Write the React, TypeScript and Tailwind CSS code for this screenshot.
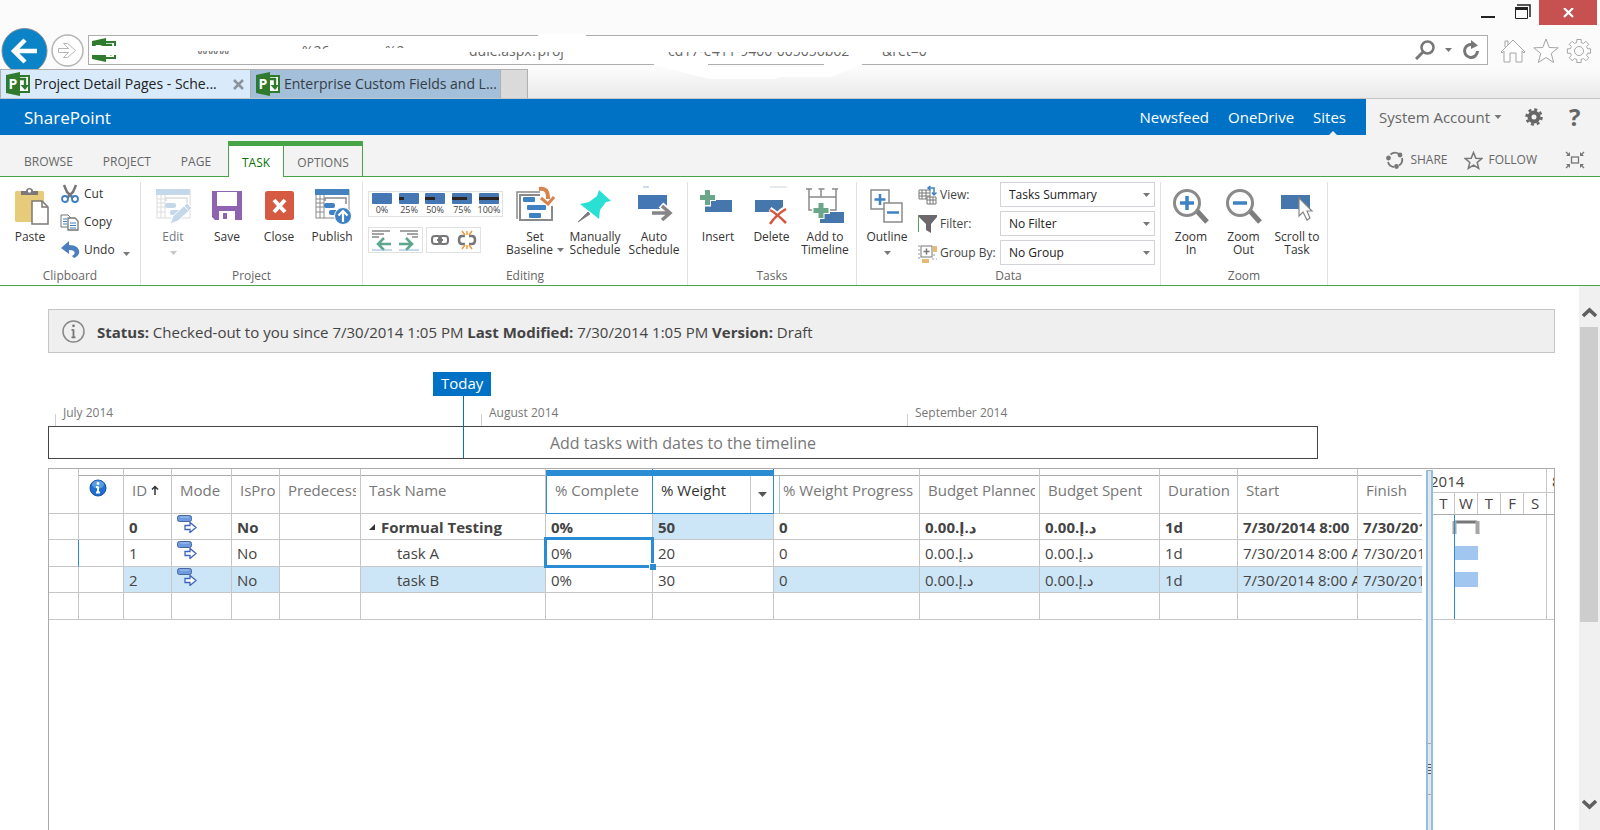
import type { ReactNode } from "react";

const ribbonTabs = ["BROWSE", "PROJECT", "PAGE"];
const suiteLinks = ["Newsfeed", "OneDrive", "Sites"];

const columns = [
  { title: "ID", width: 48 },
  { title: "Mode", width: 60 },
  { title: "IsPro", width: 48 },
  { title: "Predecess", width: 81 },
  { title: "Task Name", width: 185 },
  { title: "% Complete", width: 107 },
  { title: "% Weight", width: 121 },
  { title: "% Weight Progress", width: 146 },
  { title: "Budget Planned", width: 120 },
  { title: "Budget Spent", width: 120 },
  { title: "Duration", width: 78 },
  { title: "Start", width: 120 },
  { title: "Finish", width: 120 },
];

const tasks = [
  { id: "0", name: "Formual Testing", weight: "50", start: "7/30/2014 8:00", summary: true },
  { id: "1", name: "task A", weight: "20", start: "7/30/2014 8:00 AM", summary: false },
  { id: "2", name: "task B", weight: "30", start: "7/30/2014 8:00 AM", summary: false },
];

const percents = [
  { label: "0%", done: 0 },
  { label: "25%", done: 5 },
  { label: "50%", done: 10 },
  { label: "75%", done: 15 },
  { label: "100%", done: 20 },
];

const filters = [
  { id: "view", label: "View:", value: "Tasks Summary" },
  { id: "filter", label: "Filter:", value: "No Filter" },
  { id: "group", label: "Group By:", value: "No Group" },
];

function Caret({ className = "text-[#777]" }: { className?: string }) {
  return (
    <svg width="7" height="4" viewBox="0 0 7 4" className={className}>
      <path d="M0 0h7L3.5 4z" fill="currentColor" />
    </svg>
  );
}

function ProjectLogo() {
  return (
    <svg width="24" height="24" viewBox="0 0 24 24" className="shrink-0">
      <path d="M13 4h10v16H13" fill="#fff" stroke="#2f7a2d" strokeWidth="2" />
      <path d="M13 7h6v8" fill="none" stroke="#2f7a2d" strokeWidth="2.4" />
      <path d="M14.5 13l4.5 5 4-5z" fill="#2f7a2d" />
      <path d="M0 3l14-3v24L0 21z" fill="#2f7a2d" />
      <text x="2.5" y="17" fontSize="14" fontWeight="700" fill="#fff" fontFamily="Open Sans, sans-serif">
        P
      </text>
    </svg>
  );
}

/* ---------- Ribbon icons ---------- */

function Icon({ children }: { children: ReactNode }) {
  return (
    <svg width="40" height="40" viewBox="0 0 40 40" fill="none">
      {children}
    </svg>
  );
}

const PasteIcon = () => (
  <Icon>
    <rect x="5" y="5" width="29" height="31" rx="1.5" fill="#e6cc7a" />
    <path d="M11 9V5h5c0-4 7-4 7 0h5v4z" fill="#7d7777" />
    <circle cx="19.500" cy="5" r="1.700" fill="#fff" />
    <path d="M22 15h10l6 6v17H22z" fill="#fff" stroke="#7d7777" strokeWidth="1.500" />
    <path d="M32 15v6h6" stroke="#7d7777" strokeWidth="1.500" />
  </Icon>
);

const ScheduleSheet = ({ head, line, bar }: { head: string; line: string; bar: string }) => (
  <>
    <rect x="4" y="4" width="33" height="28" fill="#fff" stroke={line} />
    <path d="M4 13h8M4 17h8M4 21h8M4 26h8M8 9v23M12 9v23" stroke={line} />
    <path d="M13 15v-3h21v6" stroke={line} strokeWidth="1.500" />
    <rect x="3" y="3" width="34" height="6" fill={head} />
    <rect x="12" y="17" width="11" height="5" rx="2" fill={bar} />
    <rect x="17" y="24" width="11" height="5" rx="2" fill={bar} />
  </>
);

const EditIcon = () => (
  <Icon>
    <ScheduleSheet head="#c5d8ea" line="#dcdcdc" bar="#c5d8ea" />
    <path d="M17 38l3-8 14-13 5 5-14 13z" fill="#c5d8ea" stroke="#fff" strokeWidth="1" />
    <path d="M30 19l5 5" stroke="#fff" />
  </Icon>
);

const PublishIcon = () => (
  <Icon>
    <ScheduleSheet head="#4583be" line="#8a8a8a" bar="#3f82c4" />
    <circle cx="31" cy="30" r="8.500" fill="#3f82c4" stroke="#fff" />
    <path d="M31 36V25M26.500 29.500L31 25l4.500 4.500" stroke="#fff" strokeWidth="2.200" />
  </Icon>
);

const SaveIcon = () => (
  <Icon>
    <path d="M5 5h30v29H8l-3-3z" fill="#8f63b0" />
    <rect x="10" y="6" width="20" height="14" fill="#fff" />
    <path d="M12 25h16v9H12z" fill="#fff" />
    <rect x="16" y="27" width="4" height="6" fill="#8f63b0" />
  </Icon>
);

const CloseIcon = () => (
  <Icon>
    <rect x="6" y="5" width="29" height="29" rx="2.500" fill="#d65a41" />
    <path d="M15 14l11 12M26 14L15 26" stroke="#fff" strokeWidth="4" />
  </Icon>
);

const BaselineIcon = () => (
  <Icon>
    <path d="M2 33V6h23" stroke="#8a8a8a" strokeWidth="1.500" />
    <path d="M25 9H5v25h32V20" stroke="#8a8a8a" strokeWidth="2" />
    <rect x="8" y="11" width="12" height="5" rx="1" fill="#3f82c4" />
    <rect x="12" y="19" width="19" height="5" rx="1" fill="#3f82c4" />
    <rect x="14" y="27" width="12" height="5" rx="1" fill="#3f82c4" />
    <path d="M24 3c7-1 9 2 9 10" stroke="#d9834c" strokeWidth="4" />
    <path d="M26 12l7 6 6-7" stroke="#d9834c" strokeWidth="3" />
  </Icon>
);

const PinIcon = () => (
  <Icon>
    <path d="M13 26L3 36l12-8z" fill="#7d7d7d" stroke="#7d7d7d" />
    <path d="M24 4l12 11-5 1-6 8-1 9L5 18l9-2 8-6z" fill="#2ae0d2" />
  </Icon>
);

const AutoIcon = () => (
  <Icon>
    <path d="M9 1h6" stroke="#9ab9dc" />
    <rect x="4" y="9" width="29" height="14" fill="#4577b4" />
    <path d="M17 27h18M27 19l9 8-9 8" stroke="#fff" strokeWidth="7" />
    <path d="M18 27h17M28 20l8 7-8 7" stroke="#858585" strokeWidth="3.500" />
  </Icon>
);

const InsertIcon = () => (
  <Icon>
    <rect x="7" y="14" width="27" height="12" fill="#4577ac" />
    <path d="M9.500 3.500v17M1 11.500h17" stroke="#fff" strokeWidth="7" />
    <path d="M9.500 4v15M2 11.500h15" stroke="#6ba58a" strokeWidth="5" />
  </Icon>
);

const DeleteIcon = () => (
  <Icon>
    <path d="M18 1h17" stroke="#c9d4dc" />
    <rect x="3" y="14" width="28" height="12" fill="#4577ac" />
    <path d="M18 23c6 4 11 9 16 15M34 22c-7 4-11 9-16 16" stroke="#fff" strokeWidth="5" />
    <path d="M18 24c6 3 11 8 16 13M34 23c-7 4-12 9-16 15" stroke="#d6553d" strokeWidth="2.500" />
  </Icon>
);

const TimelineIcon = () => (
  <Icon>
    <path d="M1 3h6M13.500 3h6M27 3h6M4 3v21h10M16 3v8M31 3v21H20M4 11h27" stroke="#8a8a8a" strokeWidth="1.500" />
    <rect x="15" y="26" width="24" height="11" fill="#4577ac" />
    <path d="M16 15v18M7 24.500h18" stroke="#fff" strokeWidth="7" />
    <path d="M16 17v15M8.500 24.500h15" stroke="#6ba58a" strokeWidth="5" />
  </Icon>
);

const OutlineIcon = () => (
  <Icon>
    <rect x="4" y="4" width="18" height="19" stroke="#8a8a8a" strokeWidth="1.500" fill="#fff" />
    <path d="M13 8v11M7.500 13.500h11" stroke="#3f82c4" strokeWidth="2.500" />
    <rect x="17" y="17" width="18" height="19" stroke="#8a8a8a" strokeWidth="1.500" fill="#fff" />
    <path d="M20 26.500h12" stroke="#3f82c4" strokeWidth="2.500" />
  </Icon>
);

const ZoomIcon = ({ plus }: { plus?: boolean }) => (
  <Icon>
    <path d="M26 25l10 11" stroke="#7d7d7d" strokeWidth="5" />
    <circle cx="16" cy="17" r="12.500" fill="#fff" stroke="#8a8a8a" strokeWidth="3" />
    <path d={plus ? "M9 17h14M16 10v14" : "M9 17h14"} stroke="#3f82c4" strokeWidth="3.500" />
  </Icon>
);

const ScrollIcon = () => (
  <Icon>
    <rect x="4" y="9" width="29" height="14" fill="#4577ac" />
    <path d="M22 12v18l4-4 4 8 3-2-3-7h5z" fill="#fff" stroke="#858585" strokeWidth="1.200" />
  </Icon>
);

const CutIcon = () => (
  <svg width="20" height="20" viewBox="0 0 20 20" fill="none">
    <path d="M4 1l3 7 6 6M16 1l-3 7-6 6" stroke="#777" strokeWidth="2.500" />
    <circle cx="5" cy="15" r="3" stroke="#3f7fc1" strokeWidth="1.800" />
    <circle cx="15" cy="15" r="3" stroke="#3f7fc1" strokeWidth="1.800" />
  </svg>
);

const CopyIcon = () => (
  <svg width="20" height="20" viewBox="0 0 20 20" fill="none">
    <path d="M1 3h7l3 3v9H1z" fill="#fff" stroke="#777" />
    <path d="M3 7h4M3 9.500h4M3 12h4" stroke="#3f7fc1" />
    <path d="M8 6h7l3 3v9H8z" fill="#fff" stroke="#777" strokeWidth="1.300" />
    <path d="M10 11h6M10 13.500h6M10 16h6" stroke="#3f7fc1" />
  </svg>
);

const UndoIcon = () => (
  <svg width="20" height="20" viewBox="0 0 20 20" fill="none">
    <path d="M1 8l8-7v4c12 0 13 10 5 13l-2-2c4-2 4-6-3-6v4z" fill="#4b7fc0" />
  </svg>
);

const filterIcons = [
  <svg key="view" width="20" height="20" viewBox="0 0 20 20" fill="none">
    <path d="M1 5h11v9H1zM1 8h11M1 11h11M4 5v9M8 5v9" stroke="#777" />
    <path d="M9 12h9v7H9zM9 15h9M12 12v7M15 12v7" fill="#fff" stroke="#777" />
    <path d="M11 3h5v6M12.500 1l-2.500 2 2.500 2M14 7.500l2 2.500 2.500-2.500" stroke="#3f82c4" strokeWidth="1.500" />
  </svg>,
  <svg key="filter" width="20" height="20" viewBox="0 0 20 20">
    <path d="M.5 1v17" stroke="#5aa05a" />
    <path d="M1 1h18v2l-6 7v9l-5-3v-6L1 3z" fill="#6d676d" />
  </svg>,
  <svg key="group" width="20" height="20" viewBox="0 0 20 20" fill="none">
    <rect x="3" y="3" width="11" height="11" stroke="#777" fill="#fff" />
    <path d="M8.500 5.500v6M5.500 8.500h6" stroke="#777" strokeWidth="1.500" />
    <path d="M15 3h4v6h-4zM4 16h7v4H4z" fill="#e8b877" />
    <path d="M1 2v16M15 12h4M14 16h5" stroke="#999" strokeDasharray="2 2" />
  </svg>,
];

/* ---------- Ribbon pieces ---------- */

function BigButton({
  icon,
  label,
  second,
  caret,
  disabled,
  width,
}: {
  icon: ReactNode;
  label: string;
  second?: string;
  caret?: boolean;
  disabled?: boolean;
  width: string;
}) {
  return (
    <button
      type="button"
      disabled={disabled}
      className={`flex shrink-0 flex-col items-center pt-1 leading-[13px] ${width} ${disabled ? "text-[#70777f]" : "text-[#333]"}`}
    >
      {icon}
      <span className="mt-1 whitespace-nowrap">{label}</span>
      {second && (
        <span className="flex items-center whitespace-nowrap">
          {second}
          {caret && <Caret className="ml-1 text-[#777]" />}
        </span>
      )}
      {!second && caret && <Caret className={disabled ? "mt-2 text-[#c6c6c6]" : "mt-2 text-[#777]"} />}
    </button>
  );
}

function Group({ title, width, children }: { title: string; width: string; children: ReactNode }) {
  return (
    <div className={`flex shrink-0 flex-col border-r border-[#e1e1e1] ${width}`}>
      <div className="flex flex-1">{children}</div>
      <div className="pb-px text-center leading-4 text-[#666]">{title}</div>
    </div>
  );
}

function Ribbon() {
  return (
    <div className="flex h-[109px] shrink-0 overflow-hidden border-b border-[#47a447] bg-white pt-[5px] text-xs">
      <Group title="Clipboard" width="w-[141px]">
        <BigButton icon={<PasteIcon />} label="Paste" width="ml-2 w-11" />
        <div className="ml-2 flex flex-col gap-2 pt-[2px] text-[#333]">
          <button type="button" className="flex items-center gap-1">
            <CutIcon /> Cut
          </button>
          <button type="button" className="flex items-center gap-1">
            <CopyIcon /> Copy
          </button>
          <button type="button" className="flex items-center gap-1">
            <UndoIcon /> Undo <Caret className="mt-2 ml-1 text-[#777]" />
          </button>
        </div>
      </Group>

      <Group title="Project" width="w-[222px]">
        <BigButton icon={<EditIcon />} label="Edit" caret disabled width="ml-1 w-14" />
        <BigButton icon={<SaveIcon />} label="Save" width="w-[52px]" />
        <BigButton icon={<CloseIcon />} label="Close" width="w-[52px]" />
        <BigButton icon={<PublishIcon />} label="Publish" width="w-[54px]" />
      </Group>

      <Group title="Editing" width="w-[325px]">
        <div className="ml-[5px] flex w-[135px] flex-col gap-[10px] pt-[9px]">
          <div className="flex h-[26px] items-center justify-around border border-[#e1e1e1]">
            {percents.map((p) => (
              <button key={p.label} type="button" aria-label={`${p.label} complete`}>
                <svg width="24" height="22" viewBox="0 0 24 22">
                  <rect x="2" y="0" width="20" height="11" rx="1" fill="#4577b4" />
                  <rect x="2" y="4" width={p.done} height="3" fill="#2b2420" />
                  <text x="12" y="20" textAnchor="middle" fontSize="9" fill="#444" fontFamily="Open Sans, sans-serif">
                    {p.label}
                  </text>
                </svg>
              </button>
            ))}
          </div>
          <div className="flex gap-[3px]">
            <div className="flex h-[26px] w-[55px] items-center justify-around border border-[#e1e1e1]">
              <button type="button" aria-label="Outdent">
                <svg width="20" height="22" viewBox="0 0 20 22" fill="none">
                  <path d="M0 2h18M0 5h12M0 8h7" stroke="#888" strokeWidth="1.500" />
                  <path d="M19 15H8M12 9l-6 6 6 6" stroke="#5da58c" strokeWidth="2.500" />
                  <path d="M0 21h20" stroke="#8fb4dc" />
                </svg>
              </button>
              <button type="button" aria-label="Indent">
                <svg width="20" height="22" viewBox="0 0 20 22" fill="none">
                  <path d="M1 2h18M8 5h11M13 8h6" stroke="#888" strokeWidth="1.500" />
                  <path d="M0 15h12M7 9l6 6-6 6" stroke="#5da58c" strokeWidth="2.500" />
                  <path d="M0 21h20" stroke="#8fb4dc" />
                </svg>
              </button>
            </div>
            <div className="flex h-[26px] w-[55px] items-center justify-around border border-[#e1e1e1]">
              <button type="button" aria-label="Link tasks">
                <svg width="20" height="20" viewBox="0 0 20 20" fill="none">
                  <rect x="2" y="6" width="9" height="8" rx="3" stroke="#777" strokeWidth="2" />
                  <rect x="9" y="6" width="9" height="8" rx="3" stroke="#777" strokeWidth="2" />
                  <path d="M7 10h6" stroke="#777" strokeWidth="2" />
                </svg>
              </button>
              <button type="button" aria-label="Unlink tasks">
                <svg width="20" height="20" viewBox="0 0 20 20" fill="none">
                  <path d="M8 6H5c-4 0-4 8 0 8h3M12 6h3c4 0 4 8 0 8h-3" stroke="#777" strokeWidth="2.500" />
                  <path d="M10 1v4M5 1l3 4M15 1l-3 4M10 19v-4M5 19l3-4M15 19l-3-4" stroke="#ee9a3a" strokeWidth="1.500" />
                </svg>
              </button>
            </div>
          </div>
        </div>
        <BigButton icon={<BaselineIcon />} label="Set" second="Baseline" caret width="ml-[2px] w-[60px]" />
        <BigButton icon={<PinIcon />} label="Manually" second="Schedule" width="w-[60px]" />
        <BigButton icon={<AutoIcon />} label="Auto" second="Schedule" width="w-[58px]" />
      </Group>

      <Group title="Tasks" width="w-[169px]">
        <BigButton icon={<InsertIcon />} label="Insert" width="ml-[3px] w-[54px]" />
        <BigButton icon={<DeleteIcon />} label="Delete" width="w-[53px]" />
        <BigButton icon={<TimelineIcon />} label="Add to" second="Timeline" width="w-[54px]" />
      </Group>

      <Group title="Data" width="w-[304px]">
        <BigButton icon={<OutlineIcon />} label="Outline" caret width="ml-[2px] w-14" />
        <div className="ml-[3px] flex flex-col gap-1">
          {filters.map((f, i) => (
            <div key={f.id} className="flex h-[25px] items-center">
              <label htmlFor={f.id} className="flex w-[82px] items-center gap-[2px] whitespace-nowrap text-[#444]">
                {filterIcons[i]}
                {f.label}
              </label>
              <div className="relative">
                <select
                  id={f.id}
                  className="h-[25px] w-[155px] appearance-none rounded-none border border-[#d0d4d8] bg-white pl-2 text-[#222]"
                >
                  <option>{f.value}</option>
                </select>
                <Caret className="pointer-events-none absolute top-[11px] right-[5px] text-[#777]" />
              </div>
            </div>
          ))}
        </div>
      </Group>

      <Group title="Zoom" width="w-[167px]">
        <BigButton icon={<ZoomIcon plus />} label="Zoom" second="In" width="ml-[3px] w-[54px]" />
        <BigButton icon={<ZoomIcon />} label="Zoom" second="Out" width="w-[51px]" />
        <BigButton icon={<ScrollIcon />} label="Scroll to" second="Task" width="w-[56px]" />
      </Group>
    </div>
  );
}

/* ---------- Browser chrome ---------- */

function BrowserChrome() {
  return (
    <header className="relative shrink-0 bg-[#fbfbfb]">
      <div className="flex h-[25px] items-start justify-end pr-[3px] text-[#222]">
        <button type="button" aria-label="Minimize" className="flex w-[38px] justify-center">
          <svg width="14" height="20" viewBox="0 0 14 20">
            <path d="M0 17h14" stroke="currentColor" strokeWidth="2" />
          </svg>
        </button>
        <button type="button" aria-label="Restore" className="flex w-8 justify-center">
          <svg width="16" height="20" viewBox="0 0 16 20" fill="none">
            <path d="M2 5h13v12" stroke="currentColor" strokeWidth="1.500" />
            <path d="M.500 8v10.500h12V8" stroke="currentColor" />
            <path d="M0 8.500h13" stroke="currentColor" strokeWidth="3" />
          </svg>
        </button>
        <button type="button" aria-label="Close window" className="flex h-[25px] w-[58px] items-center justify-center bg-[#c75050]">
          <svg width="11" height="10" viewBox="0 0 11 10">
            <path d="M1 0l9 9M10 0L1 9" stroke="#fff" strokeWidth="2.200" />
          </svg>
        </button>
      </div>

      <div className="flex h-[44px] items-start overflow-hidden pr-2">
        <button type="button" aria-label="Back" className="mt-[3px] ml-px">
          <svg width="47" height="46" viewBox="0 0 47 46" fill="none">
            <circle cx="23.500" cy="23" r="22.500" fill="#0a84c6" stroke="#7d8b94" />
            <path d="M13 23h23M24 12L13 23l11 11" stroke="#fff" strokeWidth="4.500" />
          </svg>
        </button>
        <button type="button" aria-label="Forward" className="mt-[9px] ml-[3px]">
          <svg width="33" height="33" viewBox="0 0 33 33" fill="none">
            <circle cx="16.500" cy="16.500" r="15.500" stroke="#b5b5b5" strokeWidth="1.500" fill="#fff" />
            <path d="M7.500 14.500h10l-5-5h4l8 7-8 7h-4l5-5h-10z" stroke="#b5b5b5" />
          </svg>
        </button>
        <div className="relative mt-[10px] ml-[4px] flex h-[30px] flex-1 items-center border border-[#adadad] bg-white pr-[7px]">
          <input type="text" aria-label="Address" className="h-full flex-1 outline-none" />
          {/* address fragments left showing around the blanked part */}
          <div className="pointer-events-none absolute inset-0 overflow-hidden text-sm leading-5 whitespace-nowrap text-[#666]">
            <div className="absolute top-[2px] left-[3px]">
              <ProjectLogo />
              <div className="absolute top-2 left-0 h-[9px] w-8 bg-white" />
            </div>
            <div className="absolute top-[15px] left-[108px] h-[3px] overflow-hidden">
              <div className="-mt-[10px]">www</div>
            </div>
            <div className="absolute top-[9px] left-[213px] h-[4px] overflow-hidden">
              <div className="-mt-[4px]">%26</div>
            </div>
            <div className="absolute top-[9px] left-[296px] h-[3px] overflow-hidden">
              <div className="-mt-[4px]">%2</div>
            </div>
            <div className="absolute top-[16px] left-[380px] h-[9px] overflow-hidden">
              <div className="-mt-[11px]">dule.aspx?proj</div>
            </div>
            <div className="absolute top-[16px] left-[579px] h-[9px] overflow-hidden">
              <div className="-mt-[11px]">cd17-e411-9400-005056b62</div>
            </div>
            <div className="absolute top-[16px] left-[793px] h-[9px] overflow-hidden">
              <div className="-mt-[11px]">&amp;ret=0</div>
            </div>
          </div>
          <button type="button" aria-label="Search" className="relative">
            <svg width="20" height="20" viewBox="0 0 20 20" fill="none">
              <circle cx="12.500" cy="7.500" r="6" stroke="#777" strokeWidth="2.500" />
              <path d="M8 12l-7 7" stroke="#777" strokeWidth="3" />
            </svg>
          </button>
          <Caret className="mx-[9px] w-[9px] text-[#777]" />
          <button type="button" aria-label="Refresh" className="relative">
            <svg width="18" height="20" viewBox="0 0 18 20" fill="none">
              <path d="M12.500 5.500A6.500 6.500 0 1 0 15.500 11" stroke="#777" strokeWidth="3" />
              <path d="M9 0l7 5.500L9 9z" fill="#777" />
            </svg>
          </button>
        </div>
        <div className="mt-[13px] ml-3 flex gap-[7px]">
          <button type="button" aria-label="Home">
            <svg width="26" height="26" viewBox="0 0 26 26" fill="#fff" stroke="#a5a5a5">
              <path d="M1 14L13 2l12 12-1 1-2-2v11h-6v-9h-6v9H4V13l-2 2zM5 9V3h3v4" />
            </svg>
          </button>
          <button type="button" aria-label="Favorites">
            <svg width="26" height="26" viewBox="0 0 26 26" fill="#fff" stroke="#a5a5a5">
              <path d="M13 1l3.200 8.500 9 .3-7 5.700 2.500 9L13 19.500 5.300 24.500l2.500-9-7-5.700 9-.3z" />
            </svg>
          </button>
          <button type="button" aria-label="Tools">
            <svg width="26" height="26" viewBox="0 0 26 26" fill="#fff" stroke="#a5a5a5">
              <path d="M10.800 1.500h4.400v3l2.400 1 2.200-2.200 3 3L20.600 8.500l1 2.300h3v4.400h-3l-1 2.300 2.200 2.200-3 3-2.200-2.200-2.400 1v3h-4.400v-3l-2.400-1-2.200 2.200-3-3 2.200-2.200-1-2.300h-3v-4.400h3l1-2.300-2.200-2.200 3-3 2.200 2.200 2.400-1z" />
              <circle cx="13" cy="13" r="4.500" />
            </svg>
          </button>
        </div>
      </div>

      <div className="flex h-[30px] border-b border-[#c4c4c4] bg-linear-to-b from-[#fbfbfb] to-[#e9e9e9] text-sm text-[#222]">
        <div className="flex w-[251px] items-center gap-1 border-t border-r border-l border-[#b0b0b0] bg-[#d9ebfb] pl-[5px]">
          <ProjectLogo />
          <a href="#schedule" className="whitespace-nowrap">
            Project Detail Pages - Sche...
          </a>
          <button type="button" aria-label="Close tab" className="mr-[6px] ml-auto">
            <svg width="11" height="11" viewBox="0 0 11 11">
              <path d="M1 1l9 9M10 1l-9 9" stroke="#8b9299" strokeWidth="2.500" />
            </svg>
          </button>
        </div>
        <div className="flex w-[250px] items-center gap-1 border-t border-r border-[#b0b0b0] bg-[#a4bfd9] pl-[5px] text-[#333d47]">
          <ProjectLogo />
          <a href="#fields" className="whitespace-nowrap">
            Enterprise Custom Fields and L...
          </a>
        </div>
        <button type="button" aria-label="New tab" className="w-[27px] border-t border-r border-[#b0b0b0] bg-[#dadada]" />
      </div>

      <svg
        width="330"
        height="50"
        viewBox="0 0 330 50"
        fill="#fff"
        className="pointer-events-none absolute top-[33px] left-[534px]"
      >
        <path d="M4 1h48v5H4zM120 30h54v4h116v-4h38v2l-32 12h-50l-5 2h-65l-56-14z" />
      </svg>
    </header>
  );
}

function SuiteBar() {
  return (
    <nav className="flex h-9 shrink-0 bg-[#f3f3f3]">
      <div className="flex flex-1 items-center bg-[#0072c6] pr-5 pl-6 text-[15px] text-white">
        <a href="#home" className="mr-auto pt-px text-[17px]">
          SharePoint
        </a>
        <div className="flex h-full gap-[19px]">
          {suiteLinks.map((link) => (
            <a key={link} href={`#${link}`} className="relative flex h-full items-center">
              {link}
              {link === "Sites" && (
                <svg width="8" height="4" viewBox="0 0 8 4" className="absolute bottom-0 left-4">
                  <path d="M0 4l4-4 4 4z" fill="#f3f3f3" />
                </svg>
              )}
            </a>
          ))}
        </div>
      </div>
      <div className="flex w-[234px] items-center pl-[13px] text-[15px] text-[#666]">
        <button type="button" className="flex items-center gap-1 whitespace-nowrap">
          System Account <Caret className="w-2 text-[#777]" />
        </button>
        <button type="button" aria-label="Settings" className="ml-[23px]">
          <svg width="18" height="18" viewBox="0 0 18 18" fill="none" stroke="#666">
            <circle cx="9" cy="9" r="4.500" strokeWidth="4" />
            <circle cx="9" cy="9" r="7.500" strokeWidth="2.500" strokeDasharray="3 2.890" />
          </svg>
        </button>
        <button type="button" aria-label="Help" className="ml-[26px] text-2xl leading-6 font-bold">
          ?
        </button>
      </div>
    </nav>
  );
}

function RibbonTabs() {
  return (
    <nav className="flex h-[42px] shrink-0 items-end border-b border-[#47a447] bg-[#f3f3f3] text-xs text-[#666]">
      <div className="flex h-[29px] items-center gap-[30px] pr-[17px] pl-6">
        {ribbonTabs.map((tab) => (
          <a key={tab} href={`#${tab}`}>
            {tab}
          </a>
        ))}
      </div>
      <div className="-mb-px flex h-9 border-t-[5px] border-[#47a447]">
        <a href="#TASK" className="flex w-14 items-center justify-center border-x border-[#47a447] bg-white pt-[2px] text-[#0a730a]">
          TASK
        </a>
        <a
          href="#OPTIONS"
          className="mb-px flex w-[79px] items-center justify-center border-r border-[#47a447] pt-[3px]"
        >
          OPTIONS
        </a>
      </div>
      <div className="mr-[15px] ml-auto flex h-8 items-center">
        <button type="button" className="flex items-center gap-[6px]">
          <svg width="18" height="18" viewBox="0 0 18 18" fill="none" stroke="#777" strokeWidth="1.800">
            <path d="M4.500 3.500A7 7 0 0 1 13 3M16 7a7 7 0 0 1-3 7.500M8 16A7 7 0 0 1 2 11" />
            <circle cx="2.500" cy="7" r="1.500" fill="#777" />
            <circle cx="14" cy="4" r="1.500" fill="#777" />
            <circle cx="10.500" cy="15.500" r="1.500" fill="#777" />
          </svg>
          SHARE
        </button>
        <button type="button" className="ml-4 flex items-center gap-[6px]">
          <svg width="19" height="19" viewBox="0 0 19 19" fill="none" stroke="#777" strokeWidth="1.500">
            <path d="M9.500 1.500l2.300 5.700 6 .3-4.600 3.900 1.500 6-5.200-3.300-5.200 3.300 1.500-6L1.200 7.500l6-.3z" />
          </svg>
          FOLLOW
        </button>
        <button type="button" aria-label="Focus on content" className="ml-7">
          <svg width="20" height="18" viewBox="0 0 20 18" fill="none" stroke="#777" strokeWidth="1.300">
            <rect x="6.500" y="6" width="7" height="6" />
            <path d="M1 1l3.500 3.500M19 1l-3.500 3.500M1 17l3.500-3.500M19 17l-3.500-3.500" />
            <path d="M5 1v4H1zM15 1v4h4zM5 17v-4H1zM15 17v-4h4z" fill="#777" stroke="none" />
          </svg>
        </button>
      </div>
    </nav>
  );
}

/* ---------- Page ---------- */

function StatusBar() {
  return (
    <div className="mt-[23px] flex h-11 shrink-0 items-center gap-3 border border-[#c6c6c6] bg-[#efefef] pl-[13px] text-[15px] text-[#444]">
      <svg width="23" height="23" viewBox="0 0 23 23" fill="none">
        <circle cx="11.500" cy="11.500" r="10.500" stroke="#888" strokeWidth="1.500" />
        <path d="M11.500 9.500v8M9.500 9.800h2M9.500 17.300h4" stroke="#777" strokeWidth="1.800" />
        <circle cx="11.500" cy="5.800" r="1.400" fill="#777" />
      </svg>
      <p className="pt-[2px] whitespace-nowrap">
        <b>Status:</b> Checked-out to you since 7/30/2014 1:05 PM <b>Last Modified:</b> 7/30/2014 1:05 PM{" "}
        <b>Version:</b> Draft
      </p>
    </div>
  );
}

function Timeline() {
  return (
    <div className="relative mt-[19px] w-[1270px] shrink-0 text-xs text-[#777]">
      <div className="flex h-[54px] items-end pl-[7px]">
        {["July 2014", "August 2014", "September 2014"].map((month) => (
          <div key={month} className="flex w-[426px] shrink-0 items-end last:w-auto">
            <span className="h-3 w-px bg-[#d0d0d0]" />
            <span className="pb-[5px] pl-[7px]">{month}</span>
          </div>
        ))}
      </div>
      <div className="flex h-[33px] items-center justify-center border border-[#444] text-base">
        Add tasks with dates to the timeline
      </div>
      <div className="absolute top-0 left-[385px] flex h-[86px] flex-col">
        <span className="bg-[#0072c6] px-2 pb-[2px] text-[15px] leading-[22px] text-white">Today</span>
        <span className="ml-[30px] w-px flex-1 bg-[#0072c6]" />
      </div>
    </div>
  );
}

function ModeIcon() {
  return (
    <svg width="20" height="18" viewBox="0 0 20 18">
      <rect x=".5" y=".5" width="14" height="6" rx="2" fill="#6d9be0" stroke="#46659c" />
      <path d="M3 2h9" stroke="#a9c8f2" />
      <path d="M8 10.500h5v-3l6 5-6 5v-3H8z" fill="#fff" stroke="#3d63bd" strokeWidth="1.300" />
    </svg>
  );
}

function Dirhams() {
  return <bdi dir="rtl">د.إ.0.00</bdi>;
}

function TaskTable() {
  const cell = "overflow-hidden border-r border-b border-[#c6c6c6] p-0 pl-[5px] whitespace-nowrap";
  const picked = "bg-[#cde6f7]";

  return (
    <table className="w-[1429px] table-fixed border-separate border-spacing-0 text-left text-[15px] leading-5 text-[#444]">
      <colgroup>
        <col style={{ width: 30 }} />
        <col style={{ width: 45 }} />
        {columns.map((c) => (
          <col key={c.title} style={{ width: c.width }} />
        ))}
      </colgroup>
      <thead>
        <tr className="h-[45px] align-top text-[#777]">
          <th className="border-r border-b border-[#c6c6c6]" aria-label="Row" />
          <th className="border-r border-b border-[#c6c6c6] p-0">
            <div className="h-[7px] border-b border-[#ababab]" />
            <svg width="18" height="18" viewBox="0 0 18 18" className="mt-[3px] ml-[10px]" role="img" aria-label="Indicators">
              <circle cx="9" cy="9" r="8" fill="#1f6fd0" stroke="#1d4f9e" />
              <ellipse cx="9" cy="5.500" rx="6" ry="4" fill="#6fb0f0" opacity=".7" />
              <path d="M9 7.500v6M7 8h2M7 13.500h4" stroke="#fff" strokeWidth="2" />
              <circle cx="9" cy="4.500" r="1.400" fill="#fff" />
            </svg>
          </th>
          {columns.map((c) => {
            const hot = c.title === "% Complete" || c.title === "% Weight";
            return (
              <th
                key={c.title}
                className={`overflow-hidden border-r border-b p-0 font-normal whitespace-nowrap ${hot ? "border-[#2a8dd4]" : "border-[#c6c6c6]"}`}
              >
                <div className={hot ? "mt-px h-[6px] bg-[#2a8dd4]" : "h-[7px] border-b border-[#ababab]"} />
                <div
                  className={`flex h-[37px] pt-1 ${c.title === "% Complete" ? "border-l border-[#2a8dd4] pl-2" : c.title === "% Weight Progress" ? "ml-[5px] border-l border-[#9cc5e6] pl-[3px]" : "pl-2"}`}
                >
                  <span className={c.title === "% Weight" ? "text-[#333]" : "mr-1 overflow-hidden"}>{c.title}</span>
                  {c.title === "ID" && (
                    <svg width="8" height="10" viewBox="0 0 8 10" className="mt-[5px] shrink-0" fill="none" stroke="#333">
                      <path d="M4 10V1.500M1 4.500l3-3 3 3" strokeWidth="1.500" />
                    </svg>
                  )}
                  {c.title === "% Weight" && (
                    <button
                      type="button"
                      aria-label="Column menu"
                      className="-mt-1 ml-auto flex w-[23px] items-center justify-center border-l border-[#c6c6c6]"
                    >
                      <svg width="9" height="5" viewBox="0 0 9 5">
                        <path d="M0 0h9L4.500 5z" fill="#555" />
                      </svg>
                    </button>
                  )}
                </div>
              </th>
            );
          })}
        </tr>
      </thead>
      <tbody>
        {tasks.map((t) => {
          const row = t.id === "2" ? picked : "";
          return (
            <tr key={t.id} className={`h-[26px] even:h-[27px] ${t.summary ? "font-bold" : ""}`}>
              <td className={`border-r border-b border-[#c6c6c6] ${t.id === "1" ? "border-r-[#2a8dd4]" : ""}`} />
              <td className={cell} />
              <td className={`${cell} ${row}`}>{t.id}</td>
              <td className={`${cell} pt-px align-top ${row}`}>
                <ModeIcon />
              </td>
              <td className={`${cell} ${row}`}>No</td>
              <td className={cell} />
              <td className={`${cell} ${row}`}>
                {t.summary ? (
                  <span className="flex items-center gap-[6px] pl-[3px]">
                    <svg width="6" height="6" viewBox="0 0 6 6">
                      <path d="M6 0v6H0z" fill="#333" />
                    </svg>
                    {t.name}
                  </span>
                ) : (
                  <span className="pl-[31px]">{t.name}</span>
                )}
              </td>
              <td className={t.id === "1" ? "relative border-r border-b border-[#c6c6c6] p-0 pl-[5px]" : cell}>
                0%
                {t.id === "1" && (
                  <div className="absolute -top-[3px] -right-[2px] -bottom-[2px] -left-[2px] border-[3px] border-[#2a8dd4]">
                    <span className="absolute -right-[5px] -bottom-[5px] size-[7px] border-t border-l border-white bg-[#2a8dd4]" />
                  </div>
                )}
              </td>
              <td className={`${cell} ${t.summary ? picked : ""}`}>{t.weight}</td>
              <td className={`${cell} ${row}`}>0</td>
              <td className={`${cell} ${row}`}>
                <Dirhams />
              </td>
              <td className={`${cell} ${row}`}>
                <Dirhams />
              </td>
              <td className={`${cell} ${row}`}>1d</td>
              <td className={`${cell} ${row}`}>{t.start}</td>
              <td className={`${cell} ${row}`}>7/30/2014 5:00 PM</td>
            </tr>
          );
        })}
        <tr className="h-[27px]">
          {Array.from({ length: 15 }, (_, i) => (
            <td key={i} className="border-r border-b border-[#c6c6c6]" />
          ))}
        </tr>
      </tbody>
    </table>
  );
}

function Gantt() {
  return (
    <div className="w-[121px] shrink-0 overflow-hidden text-[15px] text-[#444]">
      <div className="flex h-6 border-b border-[#c6c6c6] leading-6">
        <div className="flex w-[114px] shrink-0 overflow-hidden border-r border-[#c6c6c6]">
          <span className="-ml-[3px]">2014</span>
        </div>
        <span className="pl-[5px]">8</span>
      </div>
      <div className="flex h-[22px] border-b border-[#ababab] text-center leading-5">
        {["T", "W", "T", "F", "S"].map((day, i) => (
          <div key={i} className="w-[23px] shrink-0 border-r border-[#c6c6c6] first:w-[22px]">
            {day}
          </div>
        ))}
      </div>
      <svg width="121" height="105" viewBox="0 0 121 105" fill="none">
        <path d="M113.500 0v104M0 104.500h121" stroke="#c6c6c6" />
        <path d="M22 7h22" stroke="#777" strokeWidth="3" />
        <path d="M21.500 6v13M44.500 6v13" stroke="#a5a5a5" strokeWidth="4" />
        <rect x="22" y="31" width="23" height="14" fill="#a1c6f0" />
        <rect x="22" y="57" width="23" height="15" fill="#a1c6f0" />
        <path d="M21.500 0v104" stroke="#2a8dd4" />
      </svg>
    </div>
  );
}

function Splitter() {
  return (
    <div className="mt-px flex w-[7px] shrink-0 flex-col border-x-2 border-[#8fbfe2] bg-[#e6e6e6]">
      <div className="flex-1 border-t border-[#ababab]" />
      <div className="flex h-[52px] flex-col items-center justify-center gap-[2px] border-y border-[#ababab]">
        <span className="h-px w-[3px] bg-[#555]" />
        <span className="h-px w-[3px] bg-[#555]" />
        <span className="h-px w-[3px] bg-[#555]" />
        <span className="h-px w-[3px] bg-[#555]" />
      </div>
      <div className="h-[35px]" />
    </div>
  );
}

function ScrollBar() {
  return (
    <div className="flex w-[21px] shrink-0 flex-col items-center bg-[#f0f0f0] pt-[21px]">
      <svg width="15" height="11" viewBox="0 0 15 11" fill="none">
        <path d="M1 9l6.500-6L14 9" stroke="#5f5f5f" strokeWidth="3.500" />
      </svg>
      <div className="mt-[9px] mr-px h-[295px] w-[18px] bg-[#cdcdcd]" />
      <svg width="15" height="11" viewBox="0 0 15 11" fill="none" className="mt-auto mb-5">
        <path d="M1 2l6.500 6L14 2" stroke="#5f5f5f" strokeWidth="3.500" />
      </svg>
    </div>
  );
}

export default function App() {
  return (
    <div className="flex h-screen flex-col overflow-hidden bg-white font-['Open_Sans','DejaVu_Sans',sans-serif]">
      <BrowserChrome />
      <SuiteBar />
      <RibbonTabs />
      <Ribbon />
      <div className="flex min-h-0 flex-1">
        <main className="flex min-w-0 flex-1 flex-col pr-6 pl-12">
          <StatusBar />
          <Timeline />
          <div className="mt-[9px] flex min-h-0 flex-1 border-t border-r border-l border-[#ababab]">
            <div className="mr-1 min-w-0 flex-1 overflow-hidden">
              <TaskTable />
            </div>
            <Splitter />
            <Gantt />
          </div>
        </main>
        <ScrollBar />
      </div>
    </div>
  );
}
